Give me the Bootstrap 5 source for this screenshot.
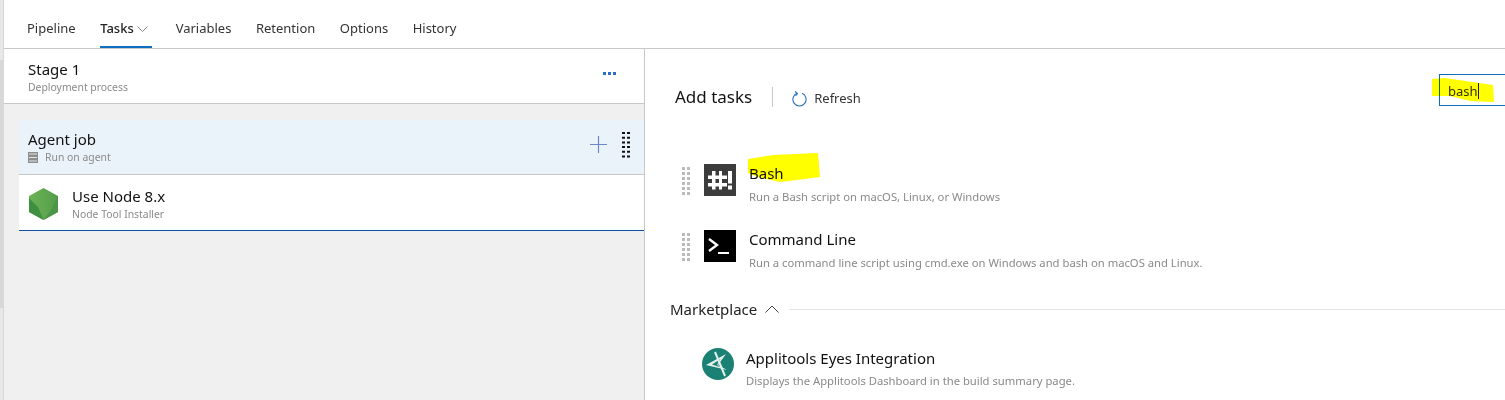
<!DOCTYPE html>
<html lang="en">
<head>
  <meta charset="UTF-8">
  <title>Tasks – Release pipeline</title>
  <link href="https://cdn.jsdelivr.net/npm/bootstrap@5.3.0/dist/css/bootstrap.min.css" rel="stylesheet">
  <style>
    html, body { height: 400px; overflow: hidden; }
    body {
      font-family: "Noto Sans", "Open Sans", sans-serif;
      font-size: 13px;
      color: #212121;
      background: #fff;
      position: relative;
    }
    .page-shell { height: 400px; }
    .edge-strip {
      width: 3px; flex: none;
      background: linear-gradient(#e8e8e8 60px, #d8d8d8 60px, #d8d8d8 308px, #e8e8e8 308px);
    }
    .page-body { border-left: 1px solid #d8d8d8; min-width: 0; }
    .tab-bar { height: 49px; border-bottom: 1px solid #c8c8c8; padding-left: 23px; gap: 24.5px; }
    .tab-link { height: 48px; line-height: 56px; color: #333; font-size: 13px; text-decoration: none; }
    .tab-on { font-weight: 500; color: #222; border-bottom: 2px solid #106ebe; width: 52px; flex: none; margin-right: -1px; }
    .tab-on svg { margin-left: 3px; vertical-align: 1px; }
    .main-area { height: 351px; }
    .left-pane { width: 641px; background: #f0f0f0; border-right: 1px solid #c8c8c8; flex: none; }
    .stage-head { height: 55px; background: #fff; border-bottom: 1px solid #c8c8c8; padding: 10px 28px 0 24px; }
    .title-line { font-size: 15px; line-height: 20px; color: #111; }
    .sub-line { font-size: 10.4px; line-height: 14px; color: #8a8a8a; margin-top: 1px; }
    .more-dots { gap: 2px; padding-top: 13px; }
    .more-dots i { width: 3px; height: 3px; background: #2a6fc4; display: block; }
    .job-list { margin: 16px 0 0 15px; }
    .job-row { height: 55px; background: #ebf3fa; border-bottom: 1px solid #c8c8c8; padding: 9px 14px 0 9px; }
    .job-tools { padding-top: 3px; gap: 15px; }
    .task-row { height: 56px; background: #fff; border-bottom: 1px solid #0f4fa0; padding: 11px 0 0 10px; gap: 14px; }
    .node-logo { margin-top: 2px; }
    .rack-icon { margin-right: 3px; }
    .right-pane { position: relative; min-width: 0; }
    .tasks-head { height: 115px; padding: 0 0 0 30px; align-items: flex-start; }
    .add-title { font-size: 17px; color: #111; line-height: 24px; margin-top: 36px; }
    .head-sep { width: 1px; height: 20px; background: #c8c8c8; margin: 38px 19px 0 20px; }
    .refresh-btn { font-size: 13px; color: #333; gap: 7px; margin-top: 40px; }
    .search-box {
      position: absolute; left: 794px; top: 25px; width: 66px; height: 32px;
      border: 1px solid #106ebe; border-right: 0; padding: 7px 0 0 8px; font-size: 13px; color: #333;
    }
    .caret-bar { display: inline-block; width: 1px; height: 16px; background: #222; vertical-align: -3px; }
    .task-item { padding-left: 37px; gap: 14px; height: 66px; }
    .grip { width: 8px; height: 28px; flex: none; margin: 3px 0 0 0; }
    .task-icon { width: 32px; height: 32px; flex: none; }
    .item-text { margin-top: -1px; margin-left: -1px; }
    .item-name { font-size: 15px; line-height: 20px; color: #111; }
    .item-desc { font-size: 11.25px; line-height: 15px; color: #8a8a8a; margin-top: 6px; }
    .market-head { padding-left: 25px; gap: 8px; height: 24px; margin-top: 1px; }
    .market-name { font-size: 15px; color: #222; }
    .market-rule { height: 1px; background: #e4e4e4; margin-left: 2px; flex-grow: 1; }
    .market-item { padding: 27px 0 0 57px; gap: 12px; }
    .market-item .item-desc { margin-top: 5px; }
    .marker-layer { position: absolute; top: 0; left: 0; mix-blend-mode: multiply; pointer-events: none; }
  </style>
</head>
<body>
<div class="d-flex page-shell">
  <div class="edge-strip"></div>
  <div class="page-body flex-grow-1">
    <div class="d-flex align-items-start tab-bar">
      <a class="tab-link" href="#">Pipeline</a>
      <a class="tab-link tab-on" href="#">Tasks<svg width="11" height="6" viewBox="0 0 11 6"><path d="M.5.5l5 5 5-5" fill="none" stroke="#888"/></svg></a>
      <a class="tab-link" href="#">Variables</a>
      <a class="tab-link" href="#">Retention</a>
      <a class="tab-link" href="#">Options</a>
      <a class="tab-link" href="#">History</a>
    </div>

    <div class="d-flex main-area">
      <div class="left-pane">
        <div class="d-flex justify-content-between stage-head">
          <div>
            <div class="title-line">Stage 1</div>
            <div class="sub-line">Deployment process</div>
          </div>
          <div class="d-flex more-dots"><i></i><i></i><i></i></div>
        </div>
        <div class="job-list">
          <div class="d-flex justify-content-between job-row">
            <div>
              <div class="title-line">Agent job</div>
              <div class="sub-line d-flex align-items-center gap-1">
                <svg class="rack-icon" width="10" height="11" viewBox="0 0 10 11"><path d="M0 0h10v11H0z" fill="#8d8d8d"/><path d="M1 2h8M1 5.500h8M1 9h8" stroke="#dfe6ec"/></svg>
                Run on agent
              </div>
            </div>
            <div class="d-flex align-items-start job-tools">
              <svg class="mt-1" width="17" height="17" viewBox="0 0 17 17"><path d="M0 8.500h17M8.500 0v17" stroke="#6f86c8" stroke-width="1.200"/></svg>
              <svg width="8" height="28" viewBox="0 0 8 28" fill="#111"><path d="M0 0h3v2H0zM5 0h3v2H5zM0 4.700h3v2H0zM5 4.700h3v2H5zM0 9.400h3v2H0zM5 9.400h3v2H5zM0 14.100h3v2H0zM5 14.100h3v2H5zM0 18.800h3v2H0zM5 18.800h3v2H5zM0 23.500h3v2H0zM5 23.500h3v2H5z"/></svg>
            </div>
          </div>
          <div class="d-flex task-row">
            <svg class="node-logo" width="29" height="32" viewBox="0 0 29 32">
              <defs><linearGradient id="nodeFill" x1="0" x2="1" y1="0" y2="0"><stop offset="0" stop-color="#6cb455"/><stop offset="1" stop-color="#549c4a"/></linearGradient></defs>
              <path d="M14.500 0 29 8v16l-14.500 8L0 24V8z" fill="url(#nodeFill)"/>
              <path d="M0 24V10l9 9 5.500 13z" fill="#3f8f42"/>
              <path d="M29 8v16l-14.500 8L22 22z" fill="#4c9447"/>
            </svg>
            <div>
              <div class="title-line">Use Node 8.x</div>
              <div class="sub-line">Node Tool Installer</div>
            </div>
          </div>
        </div>
      </div>

      <div class="right-pane flex-grow-1">
        <div class="d-flex tasks-head">
          <span class="add-title">Add tasks</span>
          <span class="head-sep"></span>
          <span class="d-flex align-items-center refresh-btn">
            <svg width="15" height="16" viewBox="0 0 15 16"><path d="M5 2.300a6.600 6.600 0 1 0 5 0" fill="none" stroke="#2a6fc4" stroke-width="1.100"/><path d="M3 .5 5.500 2.500 3.500 5" fill="none" stroke="#2a6fc4" stroke-width="1.100"/></svg>
            Refresh
          </span>
        </div>

        <div class="search-box">bash<span class="caret-bar"></span></div>

        <div class="d-flex task-item">
          <svg class="grip" viewBox="0 0 8 28" fill="#bbb"><path d="M0 0h3v3H0zM5 0h3v3H5zM0 5h3v3H0zM5 5h3v3H5zM0 10h3v3H0zM5 10h3v3H5zM0 15h3v3H0zM5 15h3v3H5zM0 20h3v3H0zM5 20h3v3H5zM0 25h3v3H0zM5 25h3v3H5z"/></svg>
          <svg class="task-icon" viewBox="0 0 32 32">
            <rect width="32" height="32" fill="#3c3c3c"/>
            <path d="M8 7h3.500v18.500H8zM15 7h3v18.500h-3zM4 11.500h19v3.500H4zM4 19h19v3.500H4z" fill="#fff"/>
            <path d="M24 7h4v12.500h-4zM24 21.500h4v4h-4z" fill="#fff"/>
          </svg>
          <div class="item-text">
            <div class="item-name">Bash</div>
            <div class="item-desc">Run a Bash script on macOS, Linux, or Windows</div>
          </div>
        </div>
        <div class="d-flex task-item">
          <svg class="grip" viewBox="0 0 8 28" fill="#bbb"><path d="M0 0h3v3H0zM5 0h3v3H5zM0 5h3v3H0zM5 5h3v3H5zM0 10h3v3H0zM5 10h3v3H5zM0 15h3v3H0zM5 15h3v3H5zM0 20h3v3H0zM5 20h3v3H5zM0 25h3v3H0zM5 25h3v3H5z"/></svg>
          <svg class="task-icon" viewBox="0 0 32 32">
            <rect width="32" height="32" fill="#000"/>
            <path d="M5 9 13 15 5 21" fill="none" stroke="#fff" stroke-width="2.400"/>
            <path d="M14 22h11v2H14z" fill="#fff"/>
          </svg>
          <div class="item-text">
            <div class="item-name">Command Line</div>
            <div class="item-desc">Run a command line script using cmd.exe on Windows and bash on macOS and Linux.</div>
          </div>
        </div>

        <div class="d-flex align-items-center market-head">
          <span class="market-name">Marketplace</span>
          <svg width="14" height="8" viewBox="0 0 14 8"><path d="M.5 7.500 7 1l6.500 6.500" fill="none" stroke="#444"/></svg>
          <span class="market-rule"></span>
        </div>
        <div class="d-flex market-item">
          <svg width="32" height="32" viewBox="0 0 32 32">
            <circle cx="16" cy="16" r="16" fill="#1b8174"/>
            <path d="M4 17 24 6 16 17l9 5z" fill="#e4f0ed"/>
            <path d="M10 16.500 18.500 11 15 17l4 2.500z" fill="#1b8174"/>
            <path d="M13 4 23 28" fill="none" stroke="#e4f0ed" stroke-width="2"/>
          </svg>
          <div>
            <div class="item-name">Applitools Eyes Integration</div>
            <div class="item-desc">Displays the Applitools Dashboard in the build summary page.</div>
          </div>
        </div>
      </div>
    </div>
  </div>
</div>

<svg class="marker-layer" width="1505" height="400" viewBox="0 0 1505 400" fill="#ffff00">
  <path d="M748 159 773 155 818 153 820 177 797 180 780 182 758 177 748 173z"/>
  <path d="M1432 79 1445 78 1493 85 1494 102 1470 101 1450 96 1432 96z"/>
</svg>
</body>
</html>
